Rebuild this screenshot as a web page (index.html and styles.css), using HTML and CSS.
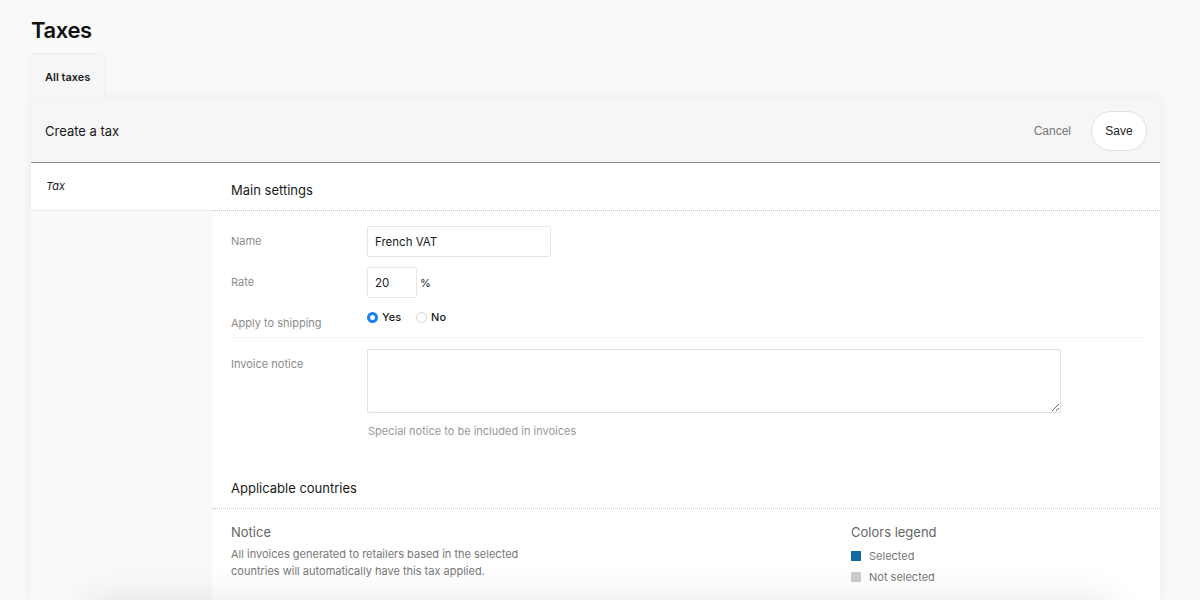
FILE: index.html
```html
<!DOCTYPE html>
<html lang="en">
<head>
<meta charset="utf-8">
<title>Taxes</title>
<link rel="stylesheet" href="styles.css">
</head>
<body>
<div class="page">
  <h1 class="page-title">Taxes</h1>
  <div class="tabs">
    <div class="tab tab-active">All taxes</div>
  </div>

  <div class="card">
    <div class="card-header">
      <div class="card-title">Create a tax</div>
      <div class="card-actions">
        <button class="btn-link" type="button">Cancel</button>
        <button class="btn-pill" type="button">Save</button>
      </div>
    </div>

    <div class="card-body">
      <nav class="sidenav">
        <div class="sidenav-item">Tax</div>
      </nav>

      <div class="content">
        <section class="section">
          <h2 class="section-title">Main settings</h2>
          <div class="form">
            <div class="row">
              <label class="label">Name</label>
              <input class="input input-name" type="text" value="French VAT">
            </div>
            <div class="row">
              <label class="label">Rate</label>
              <div class="rate">
                <input class="input input-rate" type="text" value="20">
                <span class="unit">%</span>
              </div>
            </div>
            <div class="row row-divided">
              <label class="label">Apply to shipping</label>
              <div class="radios">
                <span class="radio"><span class="dot dot-on"></span>Yes</span>
                <span class="radio"><span class="dot"></span>No</span>
              </div>
            </div>
            <div class="row row-notice">
              <label class="label">Invoice notice</label>
              <div class="field">
                <textarea class="textarea"></textarea>
                <div class="help">Special notice to be included in invoices</div>
              </div>
            </div>
          </div>
        </section>

        <section class="section">
          <h2 class="section-title">Applicable countries</h2>
          <div class="countries">
            <div class="notice">
              <h3 class="sub-title">Notice</h3>
              <p class="notice-text">All invoices generated to retailers based in the selected countries will automatically have this tax applied.</p>
            </div>
            <div class="legend">
              <h3 class="sub-title">Colors legend</h3>
              <div class="legend-item"><span class="swatch swatch-on"></span>Selected</div>
              <div class="legend-item"><span class="swatch swatch-off"></span>Not selected</div>
            </div>
          </div>
        </section>
      </div>
    </div>
  </div>
</div>
<div class="footer-bar"></div>
</body>
</html>
```

FILE: styles.css
```css
* {
  box-sizing: border-box;
}

html, body {
  margin: 0;
  padding: 0;
  background: #f9f9f9;
  height: 100%;
  overflow: hidden;
}

body {
  font-family: Inter, "Liberation Sans", sans-serif;
  color: #1e1e1e;
}

.page {
  padding: 15px 0 0 31px;
  width: 1160px;
}

.page-title {
  margin: 0 0 10px;
  font-size: 22px;
  line-height: 30px;
  font-weight: 600;
  letter-spacing: -0.4px;
  color: #111;
}

.tabs {
  display: flex;
}

.tab {
  height: 44px;
  padding: 0 14px;
  font-size: 11px;
  font-weight: 600;
  line-height: 44px;
  color: #1a1a1a;
}

.tab-active {
  background: #f6f6f6;
  box-shadow: -1px -1px 3px rgba(0, 0, 0, 0.03), 1px -1px 3px rgba(0, 0, 0, 0.03);
}

.card {
  background: #fff;
  box-shadow: 0 0 14px rgba(0, 0, 0, 0.06);
}

.card-header {
  height: 64px;
  display: flex;
  align-items: center;
  justify-content: space-between;
  padding: 0 13px 0 14px;
  background: #f6f6f6;
  border-bottom: 1px solid #8e8e8e;
}

.card-title {
  font-size: 13px;
  color: #1a1a1a;
  padding-top: 1px;
}

.card-actions {
  display: flex;
  align-items: center;
  gap: 20px;
}

.btn-link {
  border: 0;
  background: none;
  font-family: "Liberation Sans", sans-serif;
  font-size: 12px;
  color: #777;
  padding: 0;
}

.btn-pill {
  width: 56px;
  height: 40px;
  border-radius: 20px;
  border: 1px solid #e2e2e2;
  background: #fff;
  font-family: "Liberation Sans", sans-serif;
  font-size: 12px;
  color: #222;
  padding: 0;
}

.card-body {
  display: flex;
  min-height: 437px;
}

.sidenav {
  width: 181px;
  flex: none;
  background: #f9f9f9;
}

.sidenav-item {
  height: 48px;
  padding: 16px 0 0 15px;
  background: #fff;
  border-bottom: 1px solid #ececec;
  font-size: 11px;
  font-style: italic;
  color: #222;
}

.content {
  flex: 1;
  background: #fff;
}

.section-title {
  margin: 0;
  height: 48px;
  padding: 17px 19px 0;
  font-size: 13px;
  font-weight: 400;
  line-height: 20px;
  color: #1a1a1a;
  border-bottom: 1px dotted #c9c9c9;
}

.form {
  padding: 15px 17px 21px 19px;
}

.row {
  display: flex;
  align-items: flex-start;
  margin-bottom: 10px;
}

.label {
  width: 136px;
  flex: none;
  font-size: 11px;
  line-height: 30px;
  color: #8c8c8c;
}

.input {
  height: 31px;
  border: 1px solid #e6e6e6;
  border-radius: 2px;
  padding: 0 7px;
  font-family: Inter, "Liberation Sans", sans-serif;
  font-size: 11.5px;
  color: #1a1a1a;
  background: #fff;
  outline: none;
}

.input-name {
  width: 184px;
}

.input-rate {
  width: 50px;
}

.rate {
  display: flex;
  align-items: center;
  gap: 3px;
}

.unit {
  font-size: 11px;
  color: #222;
}

.row-divided {
  height: 30px;
  margin-bottom: 0;
  border-bottom: 1px solid #f2f2f2;
}

.radios {
  display: flex;
  gap: 15px;
  line-height: 18px;
}

.radio {
  display: inline-flex;
  align-items: center;
  gap: 4px;
  font-size: 11px;
  font-weight: 500;
  color: #1a1a1a;
}

.dot {
  width: 11px;
  height: 11px;
  border-radius: 50%;
  border: 1px solid #d6d6d6;
  background: #fff;
}

.dot-on {
  border: 3.5px solid #1d7ef2;
  background: #fff;
}

.row-notice {
  padding-top: 11px;
  margin-bottom: 0;
}

.field {
  display: flex;
  flex-direction: column;
}

.textarea {
  width: 694px;
  height: 64px;
  border: 1px solid #e2e2e2;
  border-radius: 2px;
  resize: vertical;
  outline: none;
  background: #fff;
}

.help {
  margin-top: 9px;
  padding-left: 1px;
  font-size: 11px;
  line-height: 18px;
  color: #999;
}

.countries {
  display: flex;
  padding: 13px 19px 0;
}

.notice {
  width: 620px;
  flex: none;
}

.sub-title {
  margin: 0 0 4px;
  font-size: 13px;
  font-weight: 400;
  line-height: 20px;
  color: #666;
}

.notice-text {
  margin: 0;
  width: 300px;
  font-size: 11px;
  line-height: 17px;
  color: #777;
}

.legend-item {
  display: flex;
  align-items: center;
  gap: 8px;
  height: 21px;
  font-size: 11px;
  color: #777;
}

.legend-item:first-of-type {
  margin-top: -1px;
}

.swatch {
  width: 10px;
  height: 10px;
  flex: none;
}

.swatch-on {
  background: #136aa0;
}

.swatch-off {
  background: #cacaca;
}

/* sticky action bar parked just below the fold; only its shadow shows */
.footer-bar {
  position: fixed;
  left: 90px;
  right: 90px;
  bottom: -40px;
  height: 40px;
  background: #fff;
  box-shadow: 0 0 36px rgba(0, 0, 0, 0.1);
}
```
